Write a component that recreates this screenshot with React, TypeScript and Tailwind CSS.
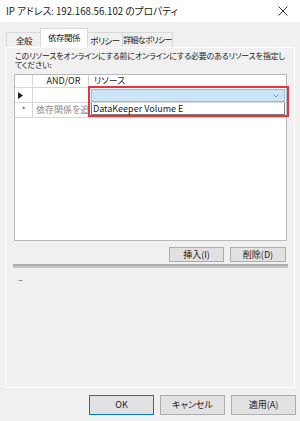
const FONT = "font-['Noto_Sans_CJK_JP','Noto_Sans',sans-serif] [font-feature-settings:'palt']";

function WinButton({ label, w, h, primary }: { label: string; w: string; h: string; primary?: boolean }) {
  return (
    <div
      className={`${w} ${h} shrink-0 flex items-center justify-center bg-[#e1e1e1] border text-[9px] text-[#1a1a1a] whitespace-nowrap ${
        primary ? "border-[#0078d7]" : "border-[#adadad]"
      }`}
    >
      {label}
    </div>
  );
}

export default function App() {
  return (
    <div className={`w-[300px] h-[421px] bg-[#f0f0f0] overflow-hidden flex flex-col ${FONT}`}>
      {/* title bar */}
      <div className="h-[22px] bg-white flex items-center justify-between pl-[6px] pr-[12px] shrink-0">
        <span className="text-[9.7px] text-[#1a1a1a] whitespace-nowrap">IP アドレス: 192.168.56.102 のプロパティ</span>
        <svg width="10" height="10" viewBox="0 0 10 10">
          <path d="M0.5 0.5 L9.5 9.5 M9.5 0.5 L0.5 9.5" stroke="#222" strokeWidth="0.9" fill="none" />
        </svg>
      </div>

      {/* tabs */}
      <div className="h-[25px] flex items-end pl-[6px] text-[8.5px] tracking-[-0.5px] text-[#1a1a1a] shrink-0 whitespace-nowrap">
        <div className="shrink-0 w-[36px] h-[15px] border border-b-0 border-[#d9d9d9] flex items-center justify-center">全般</div>
        <div className="shrink-0 relative z-10 -ml-[2px] w-[48px] h-[19px] bg-white border border-b-0 border-[#d9d9d9] flex items-center justify-center pb-[1px]">
          依存関係
        </div>
        <div className="shrink-0 -ml-[2px] w-[37px] h-[15px] border border-b-0 border-l-0 border-[#d9d9d9] flex items-center justify-center pl-[2px]">
          ポリシー
        </div>
        <div className="shrink-0 w-[50px] h-[15px] border border-b-0 border-l-0 border-[#d9d9d9] flex items-center justify-center text-[8px] tracking-[-0.7px]">
          詳細なポリシー
        </div>
      </div>

      {/* tab page */}
      <div className="mx-[5px] w-[290px] h-[341px] border border-white flex flex-col shrink-0 text-[9px] text-[#1a1a1a]">
        <div className="pl-[9px] pt-[3px] leading-[9px] text-[7.9px] tracking-[-0.1px]">
          <div className="whitespace-nowrap">このリソースをオンラインにする前にオンラインにする必要のあるリソースを指定し</div>
          <div className="whitespace-nowrap">てください:</div>
        </div>

        {/* grid */}
        <div className="relative ml-[8px] mt-[5px] w-[273px] h-[167px] bg-white border border-[#b9b9b9]">
          <div className="flex h-[13px] border-b border-[#d6d6d6]">
            <div className="w-[18px] border-r border-[#d6d6d6]" />
            <div className="w-[56px] border-r border-[#d6d6d6] flex items-center justify-center pl-[6px]">AND/OR</div>
            <div className="flex-1 flex items-center pl-[5px]">リソース</div>
          </div>
          <div className="flex h-[15px] border-b border-[#d6d6d6]">
            <div className="w-[18px] border-r border-[#d6d6d6] flex items-center pl-[3px]">
              <svg width="5" height="7" viewBox="0 0 5 7">
                <path d="M0 0 L5 3.5 L0 7 Z" fill="#222" />
              </svg>
            </div>
            <div className="w-[56px] border-r border-[#d6d6d6]" />
            <div className="flex-1 pl-[2px] pr-[1px] pt-[1px]">
              <div className="h-[13px] bg-[#cce4f7] border border-[#8fc0e8] flex items-center justify-end pr-[5px]">
                <svg width="6" height="4" viewBox="0 0 6 4">
                  <path d="M0.5 0.5 L3 3 L5.5 0.5" stroke="#7a7a7a" strokeWidth="0.8" fill="none" />
                </svg>
              </div>
            </div>
          </div>
          <div className="flex h-[15px] border-b border-[#d6d6d6]">
            <div className="w-[18px] border-r border-[#d6d6d6] flex items-center justify-center text-[8px] text-[#333]">*</div>
            <div className="flex items-center pl-[3px] text-[#8a8a8a] whitespace-nowrap">依存関係を追</div>
          </div>

          {/* open dropdown list */}
          <div className="absolute left-[76px] top-[28px] w-[194px] h-[12px] bg-white border border-[#7a7a7a] border-t-0 flex items-center pl-[1px] text-[9px] leading-none">
            DataKeeper Volume E
          </div>
          {/* highlight box */}
          <div className="absolute left-[73px] top-[11px] w-[201px] h-[31px] border-2 border-[#e8323c]" />
        </div>

        {/* insert / delete */}
        <div className="flex justify-end gap-[6px] pr-[8px] mt-[6px]">
          <WinButton label="挿入(I)" w="w-[55px]" h="h-[15px]" />
          <WinButton label="削除(D)" w="w-[56px]" h="h-[15px]" />
        </div>

        <div className="ml-[7px] mt-[2px] w-[275px] h-[4px] bg-[#c8c8c8] border-t-2 border-[#acacac]" />

        <div className="pl-[12px] pt-[5px] text-[#555]">–</div>
      </div>

      {/* dialog buttons */}
      <div className="flex justify-end gap-[6px] pr-[4px] mt-[7px]">
        <WinButton label="OK" w="w-[65px]" h="h-[20px]" primary />
        <WinButton label="キャンセル" w="w-[65px]" h="h-[20px]" />
        <WinButton label="適用(A)" w="w-[65px]" h="h-[20px]" />
      </div>
    </div>
  );
}
